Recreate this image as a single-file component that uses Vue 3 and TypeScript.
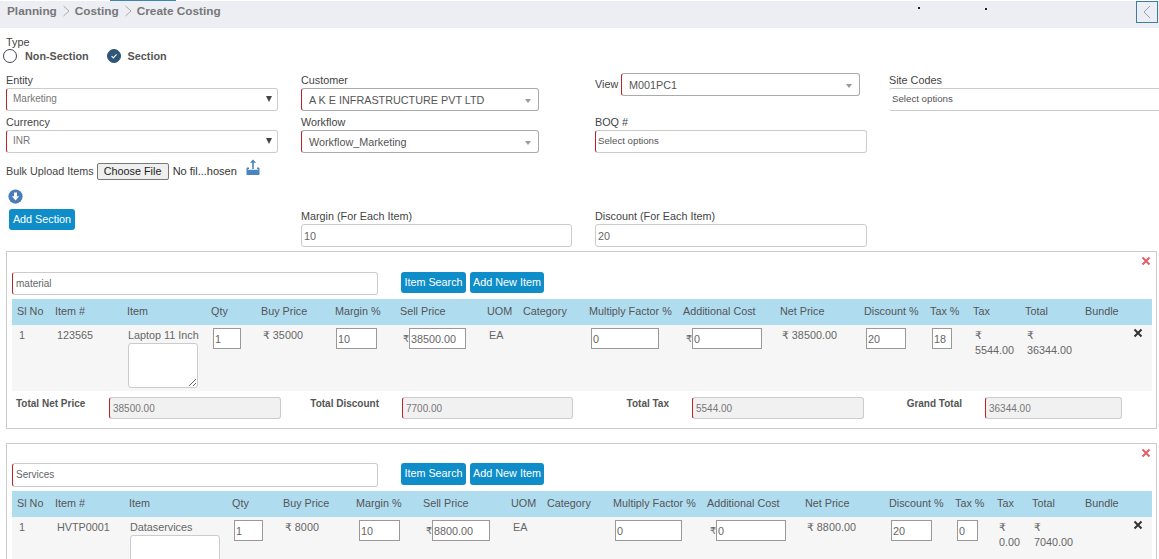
<script setup lang="ts">
interface Row {
  no: string; code: string; name: string; qty: string; buy: string; margin: string; sell: string;
  mf: string; add: string; net: string; disc: string; taxp: string; tax: string; total: string;
}
interface Section {
  name: string; tall: boolean; cols: number[]; w: number[]; ta: number; row: Row; totals: string[];
}
const heads = ['Sl No','Item #','Item','Qty','Buy Price','Margin %','Sell Price','UOM','Category','Multiply Factor %','Additional Cost','Net Price','Discount %','Tax %','Tax','Total','Bundle'];
const sections: Section[] = [
  { name: 'material', tall: false,
    cols: [38,72,84,50,74,65,87,36,66,94,97,84,66,43,52,60,72],
    w: [28,41,57,68,70,40,20], ta: 70,
    row: { no:'1', code:'123565', name:'Laptop 11 Inch', qty:'1', buy:'₹ 35000', margin:'10', sell:'38500.00', mf:'0', add:'0', net:'₹ 38500.00', disc:'20', taxp:'18', tax:'5544.00', total:'36344.00' },
    totals: ['38500.00','7700.00','5544.00','36344.00'] },
  { name: 'Services', tall: true,
    cols: [38,74,103,51,73,67,88,36,66,94,98,84,66,42,35,53,72],
    w: [29,41,58,67,70,41,21], ta: 90,
    row: { no:'1', code:'HVTP0001', name:'Dataservices', qty:'1', buy:'₹ 8000', margin:'10', sell:'8800.00', mf:'0', add:'0', net:'₹ 8800.00', disc:'20', taxp:'0', tax:'0.00', total:'7040.00' },
    totals: [] },
];
const totalLabels = ['Total Net Price','Total Discount','Total Tax','Grand Total'];
</script>

<template>
  <div class="page">
    <header class="topbar">
      <span class="tab"></span>
      <nav class="crumbs">
        <span>Planning</span>
        <svg class="sep" viewBox="0 0 8 12"><path d="M1.5 1 7 6 1.5 11" /></svg>
        <span>Costing</span>
        <svg class="sep" viewBox="0 0 8 12"><path d="M1.5 1 7 6 1.5 11" /></svg>
        <span>Create Costing</span>
      </nav>
      <i class="dot d1"></i><i class="dot d2"></i>
      <button class="toggle" type="button" aria-label="Collapse">
        <svg viewBox="0 0 10 16"><path d="M8 2 2 8l6 6" /></svg>
      </button>
    </header>

    <section class="type">
      <div class="lab">Type</div>
      <div class="radios">
        <span class="radio"></span><b class="r1">Non-Section</b>
        <span class="radio on"><svg viewBox="0 0 14 14"><path d="M4.2 7.2 6.2 9.2 10 5.2" /></svg></span><b>Section</b>
      </div>
    </section>

    <section class="form">
      <div class="field">
        <label class="lab">Entity</label>
        <div class="sel req w272 plain"><span>Marketing</span><i class="arrow dark"></i></div>
      </div>
      <div class="field">
        <label class="lab">Customer</label>
        <div class="sel req w238 chosen"><span>A K E INFRASTRUCTURE PVT LTD</span><i class="arrow"></i></div>
      </div>
      <div class="field viewf">
        <label class="lab">View</label>
        <div class="sel req chosen viewsel"><span>M001PC1</span><i class="arrow"></i></div>
      </div>
      <div class="field">
        <label class="lab">Site Codes</label>
        <div class="multi site">Select options</div>
      </div>

      <div class="field">
        <label class="lab">Currency</label>
        <div class="sel req w272 plain"><span>INR</span><i class="arrow dark"></i></div>
      </div>
      <div class="field">
        <label class="lab">Workflow</label>
        <div class="sel req w238 chosen"><span>Workflow_Marketing</span><i class="arrow"></i></div>
      </div>
      <div class="field">
        <label class="lab">BOQ #</label>
        <div class="multi req w272">Select options</div>
      </div>
    </section>

    <section class="bulk">
      <span class="lab">Bulk Upload Items</span>
      <button class="file" type="button">Choose File</button>
      <span class="nofile">No fil...hosen</span>
      <svg class="upload" viewBox="0 0 14 16">
        <path d="M0.5 9.5c0-.6.4-1 1-1H3v1.4H1.9v.8h10.2v-.8H11V8.5h1.5c.6 0 1 .4 1 1V15c0 .6-.4 1-1 1h-11c-.6 0-1-.4-1-1z" fill="#4a86bd" />
        <path d="M7 .5 3.9 3.7h2.3v6.4h1.6V3.7h2.3z" fill="#4a86bd" />
      </svg>
    </section>

    <section class="form actions">
      <div class="addcol">
        <svg class="download" viewBox="0 0 16 16">
          <circle cx="8" cy="8" r="7.6" fill="#4a7db5" />
          <path d="M6.4 3.6h3.2v4.2h2.3L8 12.2 4.1 7.8h2.3z" fill="#fff" />
        </svg>
        <button class="btn add" type="button">Add Section</button>
      </div>
      <div class="field">
        <label class="lab">Margin (For Each Item)</label>
        <input class="txt mgn" value="10" />
      </div>
      <div class="field">
        <label class="lab">Discount (For Each Item)</label>
        <input class="txt w272" value="20" />
      </div>
    </section>

    <section v-for="s in sections" :key="s.name" class="panel" :class="{ tall: s.tall }">
      <svg class="close" viewBox="0 0 10 10"><path d="M1.5 1.5 8.5 8.5M8.5 1.5 1.5 8.5" /></svg>
      <div class="tools">
        <input class="txt req secname" :value="s.name" />
        <button class="btn search" type="button">Item Search</button>
        <button class="btn newitem" type="button">Add New Item</button>
      </div>
      <table class="items">
        <colgroup><col v-for="(c, i) in s.cols" :key="i" :style="{ width: c + 'px' }" /></colgroup>
        <thead><tr><th v-for="h in heads" :key="h">{{ h }}</th></tr></thead>
        <tbody>
          <tr>
            <td>{{ s.row.no }}</td>
            <td>{{ s.row.code }}</td>
            <td class="namecell">{{ s.row.name }}<textarea class="note" :style="{ width: s.ta + 'px' }"></textarea></td>
            <td><input class="cell" :value="s.row.qty" :style="{ width: s.w[0] + 'px' }" /></td>
            <td>{{ s.row.buy }}</td>
            <td class="mgncell"><input class="cell" :value="s.row.margin" :style="{ width: s.w[1] + 'px' }" /></td>
            <td><div class="money"><span>₹</span><input class="cell" :value="s.row.sell" :style="{ width: s.w[2] + 'px' }" /></div></td>
            <td>EA</td>
            <td></td>
            <td><input class="cell" :value="s.row.mf" :style="{ width: s.w[3] + 'px' }" /></td>
            <td><div class="money"><span>₹</span><input class="cell" :value="s.row.add" :style="{ width: s.w[4] + 'px' }" /></div></td>
            <td>{{ s.row.net }}</td>
            <td><input class="cell" :value="s.row.disc" :style="{ width: s.w[5] + 'px' }" /></td>
            <td><input class="cell" :value="s.row.taxp" :style="{ width: s.w[6] + 'px' }" /></td>
            <td>₹<br />{{ s.row.tax }}</td>
            <td>₹<br />{{ s.row.total }}</td>
            <td class="rm">
              <svg viewBox="0 0 10 10"><path d="M1.5 1.5 8.5 8.5M8.5 1.5 1.5 8.5" /></svg>
            </td>
          </tr>
        </tbody>
      </table>
      <div v-if="s.totals.length" class="totals">
        <template v-for="(t, i) in s.totals" :key="i">
          <b class="tl" :class="{ first: i === 0 }">{{ totalLabels[i] }}</b>
          <input class="txt req ro" :value="t" readonly />
        </template>
      </div>
    </section>
  </div>
</template>

<style scoped>
.page {
  box-sizing: border-box;
  width: 1159px;
  height: 559px;
  padding-top: 1px;
  overflow: hidden;
  background: #fff;
  font-family: "Liberation Sans", "DejaVu Sans", sans-serif;
  font-size: 10.8px;
  color: #555;
}
.topbar {
  position: relative;
  height: 27px;
  background: #eceef3;
}
.tab { position: absolute; left: 110px; top: -1px; width: 66px; height: 1px; background: #3a87ad; }
.crumbs {
  display: flex;
  align-items: center;
  gap: 4px;
  padding: 3px 0 0 7px;
  font-size: 11.8px;
  font-weight: bold;
  color: #777;
  line-height: 14px;
}
.sep { width: 8px; height: 12px; fill: none; stroke: #999; stroke-width: 0.8; margin: 0 1px; }
.dot { position: absolute; width: 2px; height: 2px; background: #222; top: 6px; }
.d1 { left: 918px; }
.d2 { left: 985px; top: 7px; }
.toggle {
  position: absolute;
  left: 1136px;
  top: 0;
  width: 22px;
  height: 22px;
  padding: 0;
  background: transparent;
  border: 1px solid #3a7fa0;
  display: flex;
  align-items: center;
  justify-content: center;
}
.toggle svg { width: 10px; height: 16px; fill: none; stroke: #8a9aa8; stroke-width: 0.9; }

.lab { display: block; line-height: 14px; color: #444; }
.field .lab { margin-bottom: 1px; }
.type { padding: 7px 0 0 6px; height: 38px; }
.radios { display: flex; align-items: center; height: 14px; margin-left: -3px; }
.radios b { color: #555; }
.radio {
  width: 14px;
  height: 14px;
  box-sizing: border-box;
  border: 1px solid #445;
  border-radius: 50%;
  margin-right: 8px;
  flex: none;
}
.r1 { margin-right: 18px; }
.radio.on { background: #2f5578; border-color: #2f5578; margin-right: 7px; }
.radio.on svg { display: block; width: 12px; height: 12px; fill: none; stroke: #fff; stroke-width: 1.3; }

.form {
  display: grid;
  grid-template-columns: 295px 294px 294px 280px;
  padding-left: 6px;
  row-gap: 4px;
}
.field { display: flex; flex-direction: column; align-items: flex-start; }
.viewf { flex-direction: row; }
.viewf .lab { margin: 4px 0 0; width: 26px; flex: none; }
.sel, .multi, .txt {
  box-sizing: border-box;
  height: 23px;
  border: 1px solid #ccc;
  border-radius: 3px;
  background: #fff;
  color: #555;
  font: inherit;
}
.sel { position: relative; display: flex; align-items: center; border-color: #aaa; }
.plain { padding: 0 0 2px 6px; color: #777; font-size: 10px; border-color: #ccc; }
.chosen { padding: 1px 0 0 7px; font-size: 10.8px; color: #555; }
.req { border-left: 1px solid #b22; }
.w272 { width: 272px; }
.w238 { width: 238px; }
.viewsel { width: 239px; }
.arrow {
  position: absolute;
  right: 7px;
  top: 10px;
  border-left: 3.5px solid transparent;
  border-right: 3.5px solid transparent;
  border-top: 4px solid #999;
}
.arrow.dark { right: 5px; top: 7px; border-top: 6px solid #444; }
.multi { display: flex; align-items: center; padding: 0 2px 2px; font-size: 9.7px; color: #555; }
.site { width: 300px; border-left: 0; border-right: 0; padding-left: 3px; }

.bulk { display: flex; align-items: center; height: 18px; padding-left: 6px; margin-top: 9px; }
.file {
  width: 72px;
  height: 17px;
  box-sizing: border-box;
  margin-left: 3px;
  padding: 0;
  font: inherit;
  color: #222;
  background: #efefef;
  border: 1px solid #767676;
  border-radius: 2px;
}
.nofile { margin-left: 4px; color: #333; font-size: 11px; }
.upload { width: 14px; height: 16px; margin-left: 9px; margin-top: -8px; }

.actions { margin-top: 9px; align-items: end; height: 58px; }
.addcol { display: flex; flex-direction: column; align-items: flex-start; padding-left: 2px; height: 58px; }
.download { width: 15px; height: 15px; display: block; }
.btn {
  box-sizing: border-box;
  padding: 0 0 2px;
  border: 0;
  border-radius: 3px;
  background: #0f8dc9;
  color: #fff;
  font: inherit;
}
.add { width: 66px; height: 21px; margin: 5px 0 0 1px; }
.txt { padding: 0 2px; display: block; color: #666; }
.mgn { width: 271px; }

.panel {
  position: relative;
  box-sizing: border-box;
  width: 1151px;
  height: 178px;
  margin: 4px 0 14px 6px;
  padding: 20px 0 0 5px;
  border: 1px solid #ccc;
}
.panel.tall { height: 260px; padding-top: 19px; }
.close { position: absolute; left: 1134px; top: 4px; width: 10px; height: 10px; fill: none; stroke: #e0606a; stroke-width: 2; }
.tools { display: flex; align-items: flex-start; height: 27px; }
.secname { width: 366px; height: 23px; font-size: 10px; padding: 0 3px; }
.tall .tools { height: 28px; }
.tall .secname { height: 24px; padding-bottom: 2px; }
.search { width: 65px; height: 21px; margin-left: 23px; }
.newitem { width: 74px; height: 21px; margin-left: 4px; }
.tall .btn { height: 22px; }

.items { width: 1140px; table-layout: fixed; border-collapse: collapse; border-spacing: 0; }
.items th {
  height: 26px;
  box-sizing: border-box;
  padding: 0 0 2px 5px;
  background: #b0dcf0;
  font-weight: normal;
  text-align: left;
  color: #555;
  white-space: nowrap;
}
.items td {
  height: 66px;
  box-sizing: border-box;
  padding: 3px 0 0 7px;
  background: #f6f6f6;
  vertical-align: top;
  line-height: 15px;
  color: #666;
  white-space: nowrap;
}
.items td.namecell { padding-left: 6px; }
.items td.mgncell { padding-left: 6px; }
.tall .mgncell { padding-left: 8px !important; }
.money { display: flex; align-items: center; height: 21px; margin-left: 1px; }
.money span { flex: none; width: 6px; font-size: 9.5px; overflow: visible; }
.cell {
  box-sizing: border-box;
  height: 21px;
  padding: 0 1px;
  border: 1px solid #999;
  background: #fff;
  color: #666;
  font: inherit;
  vertical-align: top;
}
.note {
  display: block;
  box-sizing: border-box;
  height: 45px;
  margin: 0;
  border: 1px solid #ccc;
  border-radius: 3px;
  background: #fff;
}
.rm { position: relative; }
.rm svg { position: absolute; right: 9px; top: 3px; width: 10px; height: 10px; fill: none; stroke: #333; stroke-width: 2; }

.totals {
  display: grid;
  grid-template-columns: 93px 172px 121px 171px 119px 172px 121px 137px;
  align-items: start;
  margin-top: 6px;
  margin-left: 4px;
}
.tl { text-align: right; padding: 0 23px 0 0; line-height: 14px; color: #555; white-space: nowrap; font-weight: bold; font-size: 10px; }
.tl.first { text-align: left; padding: 0; }
.ro { background: #f1f1f1; width: 100%; height: 22px; font-size: 10px; color: #777; padding: 0 3px; }
</style>

<style>
html, body { margin: 0; overflow: hidden; }
</style>
